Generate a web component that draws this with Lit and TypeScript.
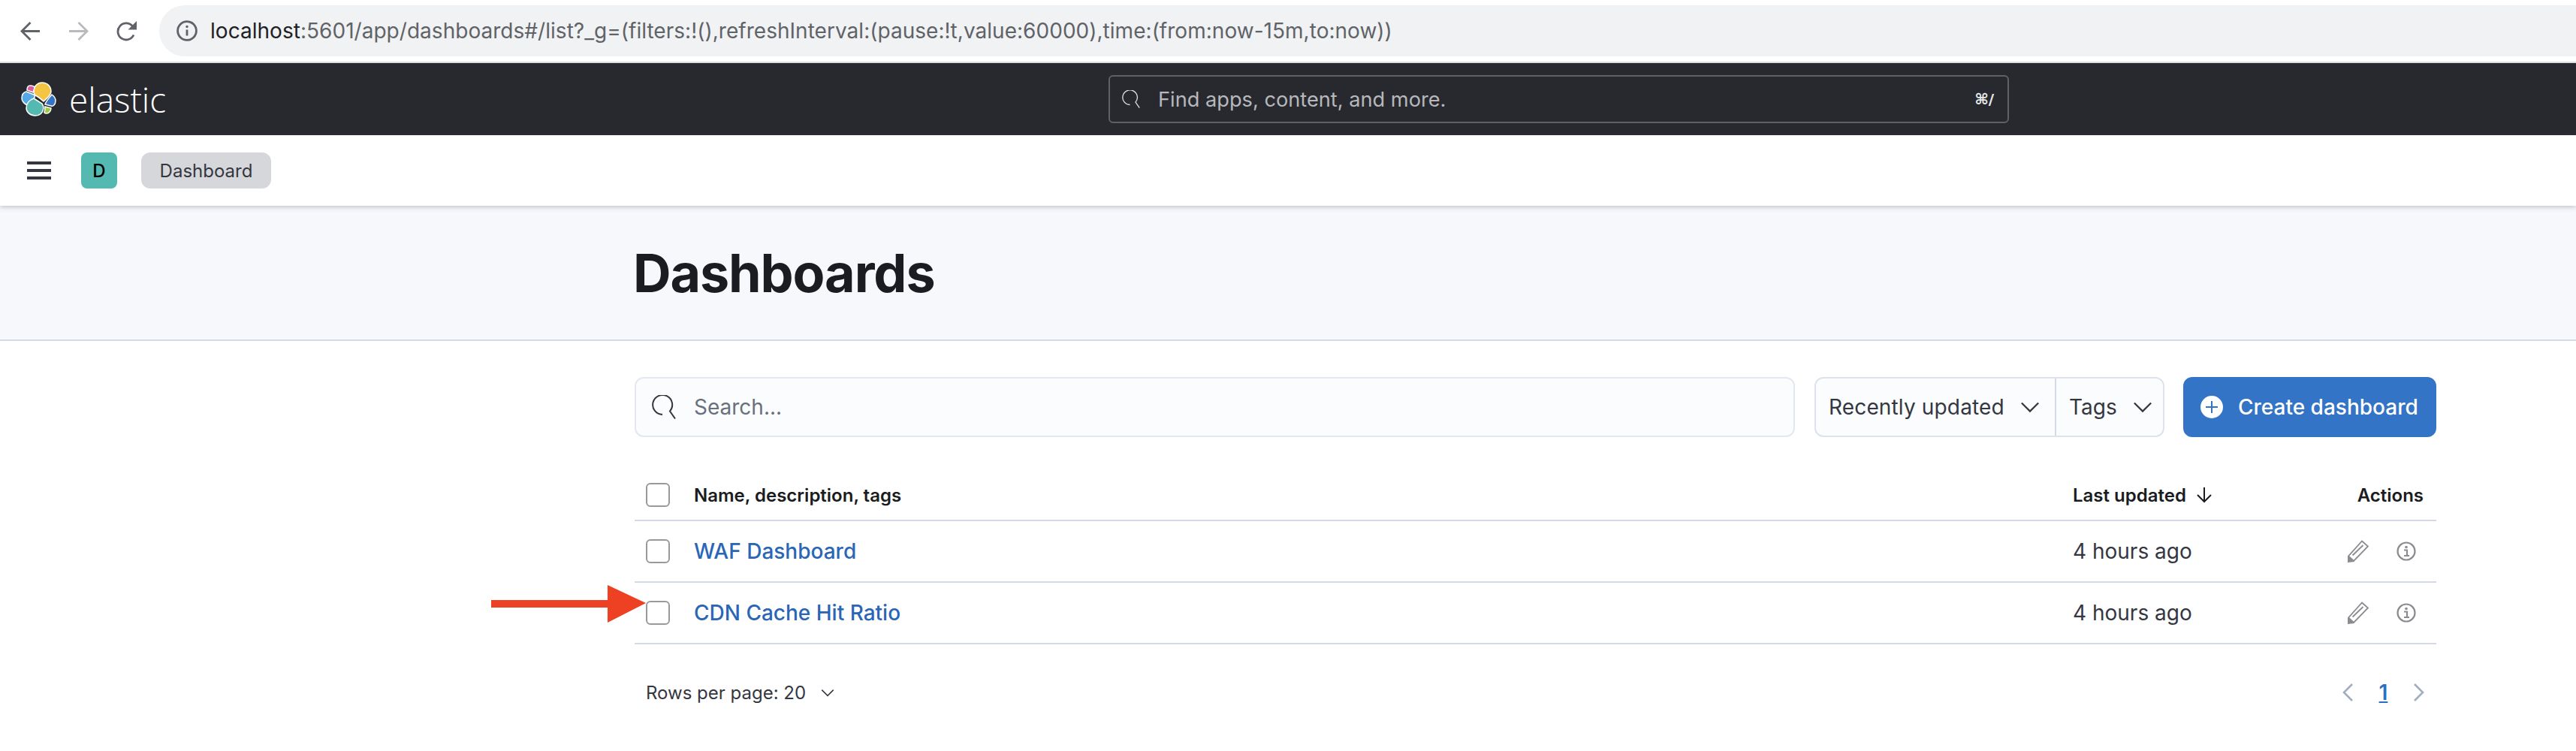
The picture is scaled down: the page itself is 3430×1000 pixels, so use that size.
import { LitElement, html, css } from 'lit';
import { customElement } from 'lit/decorators.js';

const chevron = html`<svg class="chev" viewBox="0 0 28 16"><path d="M2 2l12 12L26 2" /></svg>`;

const magnifier = html`<svg class="mag" viewBox="0 0 32 32">
  <path d="M14 26A13 13 0 1 1 24 21.5L31 31.5" />
</svg>`;

const pencil = html`<svg class="act" viewBox="0 0 28 30">
  <path class="line thin" d="M19 1.500L27 8.500L8 28L1 21.500zM6.500 20.500L20.500 7" />
  <path class="fill" d="M0 21l9 8-9 1z" />
</svg>`;

const info = html`<svg class="act" viewBox="0 0 28 28">
  <circle class="line" cx="14" cy="14" r="11.5" />
  <path class="line" d="M11 12.500H15v7.500M11 20h7" />
  <circle class="fill" cx="14" cy="8.500" r="1.800" />
</svg>`;

const rows = ['WAF Dashboard', 'CDN Cache Hit Ratio'];

@customElement('app-root')
export class AppRoot extends LitElement {
  static styles = css`
    :host {
      display: block;
      position: relative;
      min-height: 1000px;
      background: #fff;
      font-family: Inter, 'Liberation Sans', sans-serif;
      color: #343741;
    }

    svg { display: block; flex: none; fill: none; }

    .browser {
      height: 82px;
      display: flex;
      align-items: center;
      border-bottom: 2px solid #dcdee0;
      background: #fff;
      padding-left: 27px;
    }
    .nav-ico { width: 27px; height: 27px; stroke: #5f6368; stroke-width: 2.8; margin-right: 37px; }
    .nav-ico.off { stroke: #b8babd; }
    .nav-ico.reload { margin-right: 30px; }
    .nav-ico .head { fill: #5f6368; stroke: none; }
    .url {
      flex: 1;
      height: 68px;
      background: #f1f2f4;
      border-radius: 34px 0 0 34px;
      display: flex;
      align-items: center;
      padding-left: 23px;
      font-size: 28px;
      letter-spacing: 0.03px;
      color: #5f6368;
      white-space: nowrap;
    }
    .url svg { width: 28px; height: 28px; stroke: #5f6368; stroke-width: 2.8; margin-right: 17px; }
    .url svg .dot { fill: #5f6368; stroke: none; }
    .url b { font-weight: 400; color: #202124; }

    .top {
      height: 96px;
      background: #28292e;
      display: flex;
      align-items: center;
      padding-left: 28px;
    }
    .brand {
      width: 1448px;
      display: flex;
      align-items: center;
      gap: 16px;
      color: #fff;
      font-family: 'Open Sans', sans-serif;
      font-weight: 300;
      font-size: 46px;
      line-height: 48px;
    }
    .brand svg { width: 48px; height: 48px; }
    .brand svg path { stroke: #fff; stroke-width: 1.500; }
    .global {
      width: 1199px;
      height: 64px;
      box-sizing: border-box;
      border: 2px solid #5f6166;
      border-radius: 6px;
      display: flex;
      align-items: center;
      padding: 0 18px 0 16px;
      gap: 24px;
      font-size: 27.2px;
      color: #b6b8bc;
    }
    .global .mag { width: 24px; height: 24px; stroke: #e4e5e7; stroke-width: 1.700; }
    .global span { flex: 1; }
    .global kbd { font-family: 'DejaVu Sans', sans-serif; font-size: 20px; font-weight: 700; color: #e8e9ea; }

    .crumbs {
      height: 94px;
      display: flex;
      align-items: center;
      padding-left: 36px;
      background: #fff;
      position: relative;
      box-shadow: 0 2px 6px rgba(90, 100, 125, 0.35);
    }
    .burger { width: 32px; display: flex; flex-direction: column; gap: 6px; margin-right: 40px; }
    .burger i { display: block; height: 4px; background: #343741; }
    .avatar {
      width: 48px;
      height: 48px;
      border-radius: 8px;
      background: #54b9b0;
      color: #000;
      font-size: 24px;
      font-weight: 500;
      display: flex;
      align-items: center;
      justify-content: center;
      margin-right: 32px;
    }
    .chip {
      width: 173px;
      height: 48px;
      border-radius: 12px;
      background: #d6d7da;
      font-size: 24px;
      display: flex;
      align-items: center;
      justify-content: center;
    }

    .page-head {
      height: 178px;
      background: #f7f8fc;
      border-bottom: 2px solid #d5dbe8;
      padding-left: 843px;
      display: flex;
      align-items: center;
    }
    h1 { margin: 0; font-size: 70px; font-weight: 700; color: #1a1c21; letter-spacing: -1.1px; }

    .content { width: 2399px; margin-left: 845px; padding-top: 48px; }

    .tools { display: flex; height: 80px; }
    .search {
      flex: 1;
      box-sizing: border-box;
      background: #fbfcfd;
      border: 2px solid #e4e7f0;
      border-radius: 12px;
      display: flex;
      align-items: center;
      padding-left: 21px;
      gap: 24px;
      font-size: 28px;
      color: #69707d;
    }
    .search .mag { width: 32px; height: 32px; stroke: #343741; stroke-width: 2; }
    .group {
      width: 466px;
      margin-left: 26px;
      box-sizing: border-box;
      background: #fbfcfd;
      border: 2px solid #dde2ec;
      border-radius: 12px;
      display: flex;
      font-size: 28px;
    }
    .filter { display: flex; align-items: center; padding-left: 17px; box-sizing: border-box; gap: 21px; }
    .filter.sort { width: 320px; border-right: 2px solid #d3dae6; letter-spacing: 0.15px; }
    .chev { width: 26px; height: 16px; stroke: #343741; stroke-width: 2.400; }
    .create {
      width: 337px;
      margin-left: 25px;
      background: #3474c6;
      border-radius: 12px;
      display: flex;
      align-items: center;
      padding-left: 23px;
      box-sizing: border-box;
      gap: 20px;
      color: #fff;
      font-size: 28px;
      font-weight: 500;
    }
    .create svg { width: 30px; height: 30px; }

    .row {
      display: grid;
      grid-template-columns: 79px 1836px 1fr;
      align-items: center;
      height: 82px;
      box-sizing: border-box;
      border-bottom: 2px solid #d3dae6;
      font-size: 28px;
    }
    .row.head { height: 65px; margin-top: 47px; font-size: 24px; font-weight: 600; color: #1a1c21; padding-bottom: 3px; }
    .split { display: grid; grid-template-columns: 1fr auto; align-items: center; }
    .check {
      width: 32px;
      height: 32px;
      margin-left: 15px;
      box-sizing: border-box;
      border: 2px solid #98999d;
      border-radius: 6px;
      background: #fff;
    }
    .row a { color: #2a66b5; font-weight: 500; }
    .updated { display: flex; align-items: center; gap: 13px; }
    .updated svg { width: 22px; height: 22px; stroke: #1a1c21; stroke-width: 2; }
    .right { padding-right: 17px; }
    .actions { display: flex; align-items: center; gap: 36px; padding-right: 26px; }
    .act { width: 28px; height: 30px; }
    .act .line { stroke: #8a8c90; stroke-width: 2.200; fill: none; }
    .act .line.thin { stroke-width: 1.800; }
    .act .fill { fill: #8a8c90; }

    .pager { height: 128px; display: flex; align-items: center; font-size: 24px; padding-left: 15px; }
    .rpp { flex: 1; display: flex; align-items: center; gap: 20px; }
    .rpp .chev { width: 18px; height: 11px; }
    .pages { display: flex; align-items: center; }
    .pages svg { width: 47px; height: 26px; stroke: #a3adc0; stroke-width: 2.600; }
    .pages a {
      width: 47px;
      text-align: center;
      font-size: 28px;
      font-weight: 600;
      color: #2a6fc4;
      text-decoration: underline;
    }

    .callout { position: absolute; left: 654px; top: 779px; width: 206px; height: 50px; }
    .callout path { fill: #ee4023; }
  `;

  render() {
    return html`
      <div class="browser">
        <svg class="nav-ico" viewBox="0 0 27 27"><path d="M26 13.500H2M13.500 2L2 13.500 13.500 25" /></svg>
        <svg class="nav-ico off" viewBox="0 0 27 27"><path d="M1 13.500h24M13.500 2L25 13.500 13.500 25" /></svg>
        <svg class="nav-ico reload" viewBox="0 0 27 27">
          <path d="M23 18.500a11 11 0 1 1-1.500-11.500" />
          <path class="head" d="M27 0v11.500H15.500z" />
        </svg>
        <div class="url">
          <svg viewBox="0 0 28 28">
            <circle cx="14" cy="14" r="12.400" />
            <path d="M14 12.500v8" />
            <circle class="dot" cx="14" cy="8.500" r="1.700" />
          </svg>
          <span><b>localhost</b>:5601/app/dashboards#/list?_g=(filters:!(),refreshInterval:(pause:!t,value:60000),time:(from:now-15m,to:now))</span>
        </div>
      </div>

      <div class="top">
        <div class="brand">
          <svg viewBox="0 0 48 48">
            <path fill="#f4c542" d="M28 2C35 2 40 7 40 14C40 19 34 23 30 27C26 23 21 20 18 18C17 16 17 15 17 13C17 7 22 2 28 2z" />
            <path fill="#df5b9f" d="M12 6C15 6 18 7 18 9L16 15L8 12C8 9 9 6 12 6z" />
            <path fill="#53a8e8" d="M7 14L17 18C20 20 18 22 16 24L9 32C5 31 1 27 1 23C1 19 3 15 7 14z" />
            <path fill="#3474c6" d="M41 18C44 20 46 22 46 26C46 31 43 34 40 33L32 31C33 27 37 23 41 18z" />
            <path fill="#54b9b0" d="M17 23L28 30C30 33 30 35 30 36C29 42 25 46 19 46C12 46 7 41 7 36C7 30 11 25 17 23z" />
            <path fill="#9ccb3f" d="M32 34L40 36C40 40 37 43 34 43C33 43 32 43 31 42C32 39 32 37 32 34z" />
          </svg>
          <span>elastic</span>
        </div>
        <div class="global">
          ${magnifier}
          <span>Find apps, content, and more.</span>
          <kbd>⌘/</kbd>
        </div>
      </div>

      <div class="crumbs">
        <div class="burger"><i></i><i></i><i></i></div>
        <div class="avatar">D</div>
        <div class="chip">Dashboard</div>
      </div>

      <div class="page-head"><h1>Dashboards</h1></div>

      <div class="content">
        <div class="tools">
          <div class="search">${magnifier}<span>Search...</span></div>
          <div class="group">
            <div class="filter sort">Recently updated ${chevron}</div>
            <div class="filter tags">Tags ${chevron}</div>
          </div>
          <div class="create">
            <svg viewBox="0 0 30 30">
              <circle cx="15" cy="15" r="15" fill="#fff" />
              <path d="M15 7v16M7 15h16" stroke="#3474c6" stroke-width="2" />
            </svg>
            Create dashboard
          </div>
        </div>

        <div class="row head">
          <div class="check"></div>
          <div>Name, description, tags</div>
          <div class="split">
            <div class="updated">
              Last updated
              <svg viewBox="0 0 22 22"><path d="M11 1v19M2 11l9 9 9-9" /></svg>
            </div>
            <div class="right">Actions</div>
          </div>
        </div>

        ${rows.map(
          (name) => html`
            <div class="row">
              <div class="check"></div>
              <a>${name}</a>
              <div class="split">
                <div>4 hours ago</div>
                <div class="actions">${pencil}${info}</div>
              </div>
            </div>
          `
        )}

        <div class="pager">
          <div class="rpp">
            Rows per page: 20
            <svg class="chev" viewBox="0 0 28 16"><path d="M2 2l12 12L26 2" /></svg>
          </div>
          <div class="pages">
            <svg viewBox="0 0 47 26"><path d="M29 2L18 13l11 11" /></svg>
            <a>1</a>
            <svg viewBox="0 0 47 26"><path d="M18 2l11 11-11 11" /></svg>
          </div>
        </div>
      </div>

      <svg class="callout" viewBox="0 0 206 50">
        <path d="M0 20h155V0l51 24-51 26V30H0z" />
      </svg>
    `;
  }
}
